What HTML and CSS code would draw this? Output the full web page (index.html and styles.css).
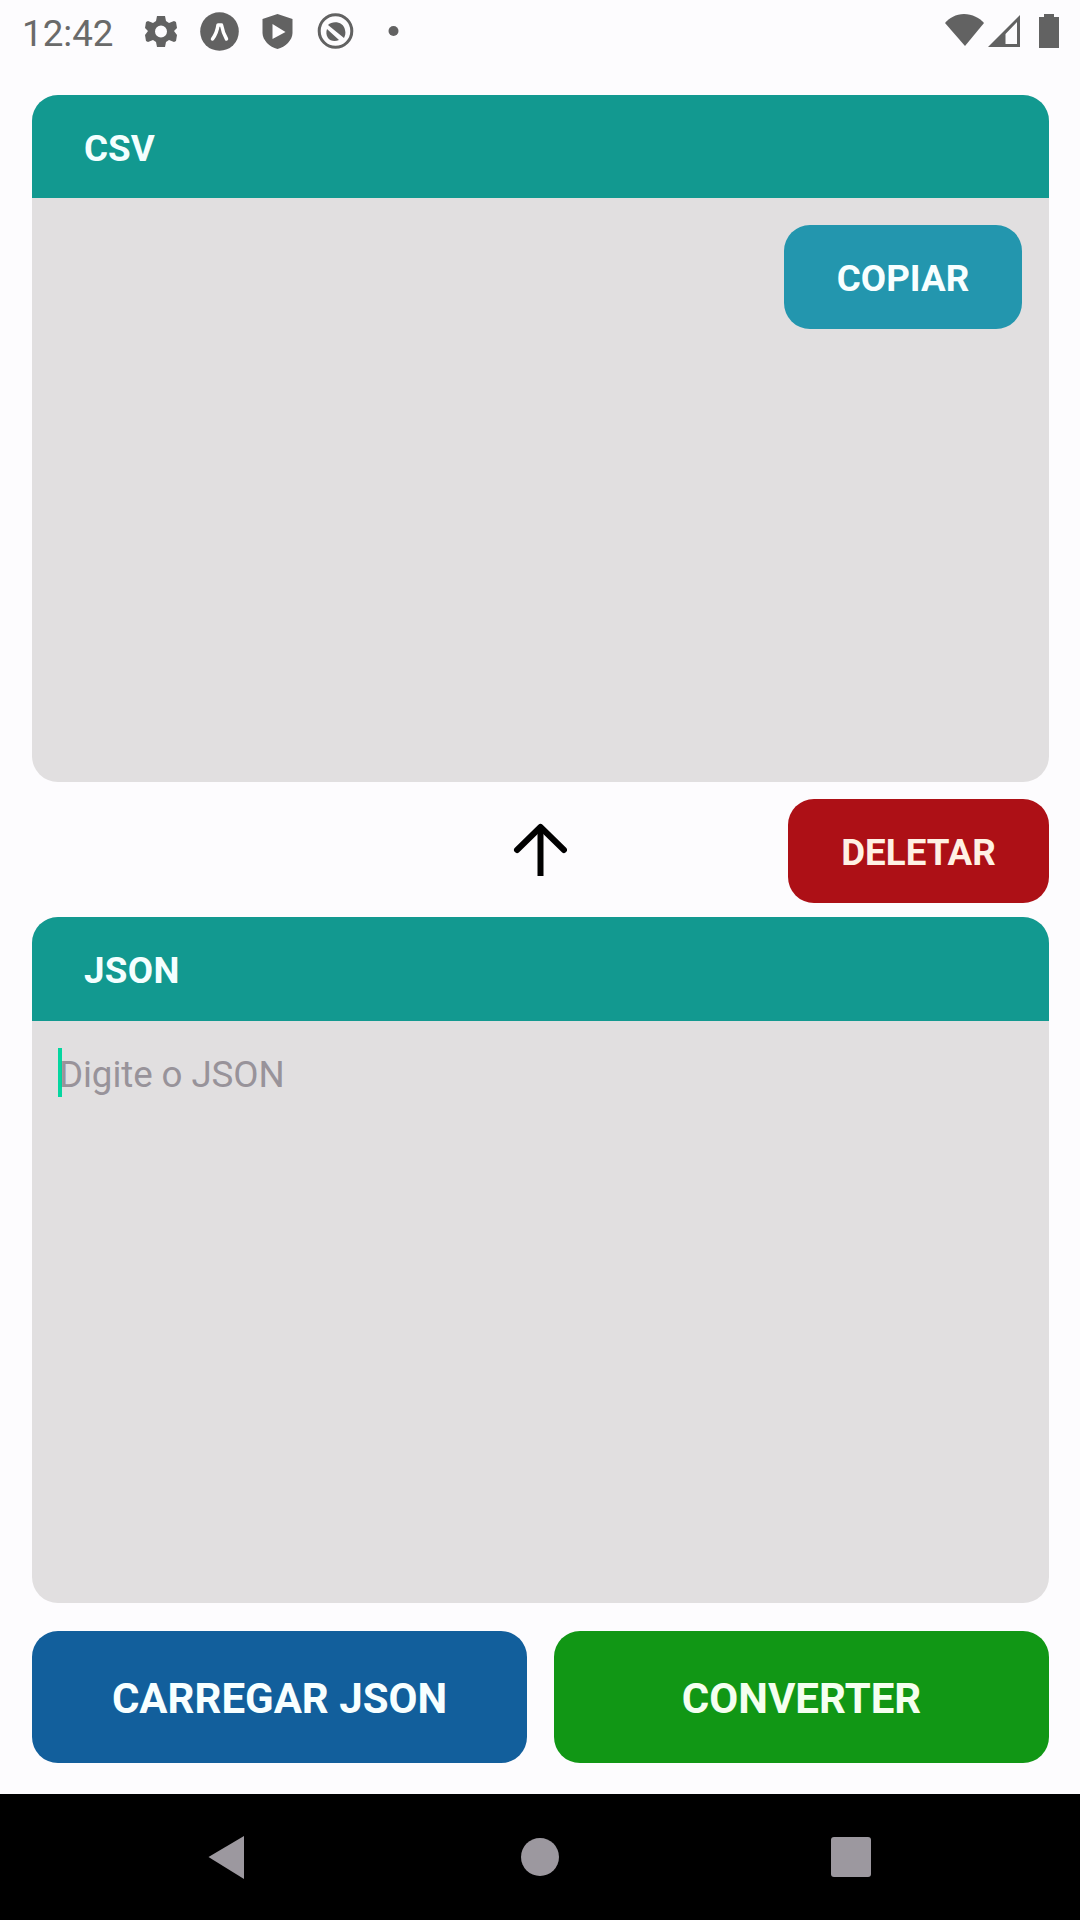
FILE: index.html
```html
<!DOCTYPE html>
<html lang="pt-BR">
<head>
<meta charset="utf-8">
<title>JSON para CSV</title>
<link rel="stylesheet" href="styles.css">
</head>
<body>
<div class="screen">
  <header class="status-bar">
    <span class="clock">12:42</span>
    <svg class="status-icons" width="260" height="56" viewBox="0 0 260 56" fill="#626262">
      <path fill-rule="evenodd" d="M17 16h8l1 5 3 2 5-2 2 1 1 6-3 3 3 4-1 6-2 1-5-2-3 2-1 5h-8l-1-5-3-2-5 2-2-1-1-6 3-4-3-3 1-6 2-1 5 2 3-2zM21 25.500a6 6 0 1 0 0 12 6 6 0 0 0 0-12z"/>
      <circle cx="79.500" cy="31.500" r="19.300"/>
      <path d="M72.500 39q4.500-6 5.500-14h3.500q1.500 8 5 14" fill="none" stroke="#fff" stroke-width="3.500" stroke-linecap="round" stroke-linejoin="round"/>
      <path fill-rule="evenodd" d="M137.500 14l15 5v14c0 7-7 14-15 16-8-2-15-9-15-16V19zM132.500 24v15l13-7z"/>
      <circle cx="195.500" cy="31" r="16.300" fill="none" stroke="#626262" stroke-width="3"/>
      <path d="M188 25c5-5 16-3 17 5 1 3 0 6-1 8zM187 29l12 11c-4 2-9 1-11-2-2-3-2-6-1-9z"/>
      <circle cx="253.500" cy="31" r="5"/>
    </svg>
    <svg class="signal-icons" width="120" height="56" viewBox="0 0 120 56" fill="#626262">
      <path d="M5 23c4-5 11-9 19-9s16 4 20 9L25 46z"/>
      <path fill-rule="evenodd" d="M48 47L80 15v32zM65.500 34v10H77V22z"/>
      <path d="M99 17h5v-3h10v3h5v31H99z"/>
    </svg>
  </header>

  <main class="content">
    <section class="card">
      <h2 class="card-title">CSV</h2>
      <div class="card-body">
        <button class="button button-copy">COPIAR</button>
      </div>
    </section>

    <div class="between">
      <svg class="arrow" width="54" height="56" viewBox="0 0 54 56" fill="none" stroke="#000" stroke-width="6">
        <path d="M27.500 54V7"/>
        <path d="M4 28L27.500 5 51 28" stroke-linecap="round" stroke-linejoin="round"/>
      </svg>
      <button class="button button-delete">DELETAR</button>
    </div>

    <section class="card card-json">
      <h2 class="card-title">JSON</h2>
      <div class="card-body input">
        <span class="caret"></span><span class="placeholder">Digite o JSON</span>
      </div>
    </section>

    <div class="actions">
      <button class="button button-large button-load">CARREGAR JSON</button>
      <button class="button button-large button-convert">CONVERTER</button>
    </div>
  </main>

  <nav class="nav-bar">
    <svg width="1080" height="126" viewBox="0 0 1080 126" fill="#9c989f">
      <path d="M208.500 63L244 42v43z"/>
      <circle cx="540" cy="63" r="19"/>
      <rect x="831" y="43" width="40" height="40" rx="3"/>
    </svg>
  </nav>
</div>
</body>
</html>
```
FILE: styles.css
```css
* {
  box-sizing: border-box;
}

body {
  margin: 0;
  background: #fdfcfe;
  font-family: Roboto, "Liberation Sans", sans-serif;
}

.screen {
  width: 1080px;
  height: 1920px;
  display: flex;
  flex-direction: column;
  overflow: hidden;
}

.status-bar {
  height: 63px;
  display: flex;
  align-items: flex-start;
}

.clock {
  width: 140px;
  padding-left: 22px;
  font-size: 36.75px;
  line-height: 67px;
  color: #6a6a6a;
}

.signal-icons {
  margin-left: auto;
  margin-right: 20px;
}

.content {
  flex: 1;
  display: flex;
  flex-direction: column;
  padding: 32px 31px 31px 32px;
}

.card {
  height: 687px;
  display: flex;
  flex-direction: column;
  border-radius: 26px;
  overflow: hidden;
  background: #e1dfe0;
}

.card-title {
  margin: 0;
  height: 103px;
  padding-left: 52px;
  background: #129990;
  color: #f4ffff;
  font-size: 36.75px;
  font-weight: 700;
  line-height: 108px;
}

.card-json {
  height: 686px;
}

.card-json .card-title {
  height: 104px;
  letter-spacing: 0.3px;
}

.card-body {
  flex: 1;
  display: flex;
  justify-content: flex-end;
  align-items: flex-start;
  padding: 27px 27px;
}

.input {
  justify-content: flex-start;
  padding: 27px 26px;
}

.caret {
  width: 4px;
  height: 49px;
  background: #05d6a0;
}

.placeholder {
  margin-left: -3px;
  font-size: 36.75px;
  line-height: 53px;
  letter-spacing: -0.1px;
  color: #98939a;
}

.button {
  height: 104px;
  padding: 2px 0 0;
  border: 0;
  border-radius: 26px;
  color: #f8ffff;
  font: 700 36.75px Roboto, "Liberation Sans", sans-serif;
}

.button-copy {
  width: 238px;
  background: #2396ae;
}

.button-delete {
  width: 261px;
  background: #ad1016;
  color: #fff1e4;
}

.between {
  height: 135px;
  padding-top: 17px;
  display: flex;
  align-items: flex-start;
  justify-content: space-between;
}

.arrow {
  margin: 23px 0 0 481px;
}

.actions {
  display: grid;
  grid-template-columns: 495px 495px;
  justify-content: space-between;
  margin-top: 28px;
}

.button-large {
  height: 132px;
  font-size: 42px;
  padding-top: 3px;
}

.button-load {
  background: #125f9c;
}

.button-convert {
  background: #119715;
  color: #f5fff0;
}

.nav-bar {
  height: 126px;
  background: #000;
}

.nav-bar svg {
  display: block;
}
```
